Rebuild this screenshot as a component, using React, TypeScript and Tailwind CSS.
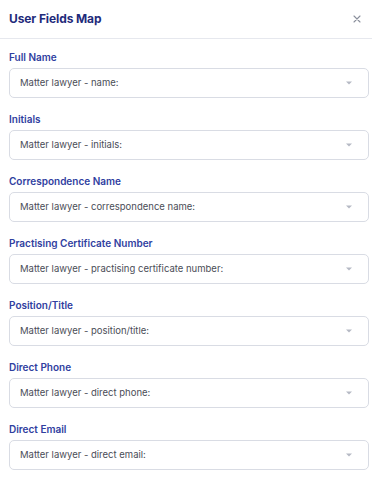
import React from "react";

const fields = [
  { label: "Full Name", value: "Matter lawyer - name:" },
  { label: "Initials", value: "Matter lawyer - initials:" },
  { label: "Correspondence Name", value: "Matter lawyer - correspondence name:" },
  { label: "Practising Certificate Number", value: "Matter lawyer - practising certificate number:" },
  { label: "Position/Title", value: "Matter lawyer - position/title:" },
  { label: "Direct Phone", value: "Matter lawyer - direct phone:" },
  { label: "Direct Email", value: "Matter lawyer - direct email:" },
];

function Caret() {
  return (
    <svg width="6" height="4" viewBox="0 0 6 4" className="text-[#b5b9c4]">
      <path d="M0 0.5h6L3 3.5z" fill="currentColor" />
    </svg>
  );
}

export default function App() {
  return (
    <div
      className="w-[372px] h-[484px] bg-white overflow-hidden"
      style={{ fontFamily: "Inter, 'Noto Sans', sans-serif" }}
    >
      {/* Header */}
      <div className="flex items-center justify-between h-[39px] pl-[9px] pr-[11px] border-b border-[#e6e8ee]">
        <h1 className="text-[12px] font-bold text-[#1f2b7b] tracking-[-0.1px]">User Fields Map</h1>
        <button className="text-[#8a8f9c] leading-none">
          <svg width="8" height="8" viewBox="0 0 8 8">
            <path d="M1 1l6 6M7 1L1 7" stroke="currentColor" strokeWidth="1.1" strokeLinecap="round" />
          </svg>
        </button>
      </div>

      {/* Fields */}
      <div className="pt-[12px] pl-[9px] pr-[3px]">
        {fields.map((f) => (
          <div key={f.label} className="mb-[15px]">
            <div className="text-[10px] leading-[12px] font-semibold text-[#3040a0]">{f.label}</div>
            <div className="mt-[5px] h-[30px] flex items-center justify-between rounded-[5px] border border-[#d9dce4] pl-[10px] pr-[16px]">
              <span className="text-[9.5px] text-[#4a4d57]">{f.value}</span>
              <Caret />
            </div>
          </div>
        ))}
      </div>
    </div>
  );
}
